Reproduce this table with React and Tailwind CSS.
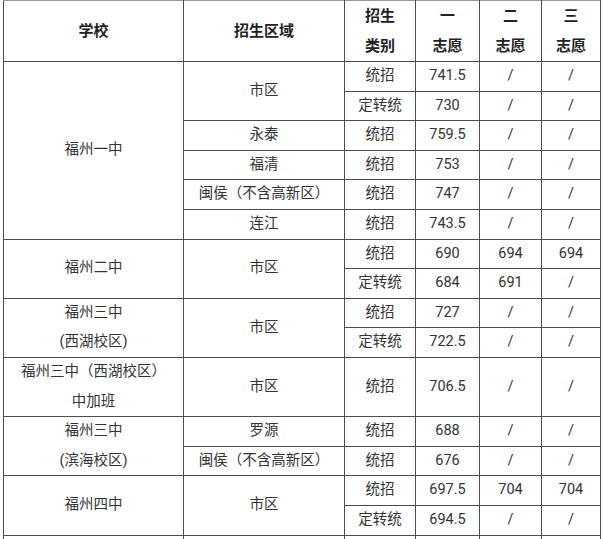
import React from 'react';

const rows = [
  { school: ['福州一中'], schoolSpan: 6, region: '市区', regionSpan: 2, type: '统招', v: ['741.5', '/', '/'] },
  { type: '定转统', v: ['730', '/', '/'] },
  { region: '永泰', regionSpan: 1, type: '统招', v: ['759.5', '/', '/'] },
  { region: '福清', regionSpan: 1, type: '统招', v: ['753', '/', '/'] },
  { region: '闽侯（不含高新区）', regionSpan: 1, type: '统招', v: ['747', '/', '/'] },
  { region: '连江', regionSpan: 1, type: '统招', v: ['743.5', '/', '/'] },
  { school: ['福州二中'], schoolSpan: 2, region: '市区', regionSpan: 2, type: '统招', v: ['690', '694', '694'] },
  { type: '定转统', v: ['684', '691', '/'] },
  { school: ['福州三中', '(西湖校区)'], schoolSpan: 2, region: '市区', regionSpan: 2, type: '统招', v: ['727', '/', '/'] },
  { type: '定转统', v: ['722.5', '/', '/'] },
  { school: ['福州三中（西湖校区）', '中加班'], schoolSpan: 1, region: '市区', regionSpan: 1, type: '统招', v: ['706.5', '/', '/'], tall: true },
  { school: ['福州三中', '(滨海校区)'], schoolSpan: 2, region: '罗源', regionSpan: 1, type: '统招', v: ['688', '/', '/'] },
  { region: '闽侯（不含高新区）', regionSpan: 1, type: '统招', v: ['676', '/', '/'] },
  { school: ['福州四中'], schoolSpan: 2, region: '市区', regionSpan: 2, type: '统招', v: ['697.5', '704', '704'] },
  { type: '定转统', v: ['694.5', '/', '/'] },
];

const cell = 'border border-[#4d4d4d] text-center align-middle p-0 leading-[28.6px]';

function Lines({ items }){
  return items.map((t, i) => <div key={i} className={i > 0 ? 'mt-[1px]' : ''}>{t}</div>);
}

export default function App(){
  return (
    <div className="bg-white w-[604px] h-[539px] overflow-hidden pl-[3px]" style={{ fontFamily: 'Roboto, "Noto Sans CJK SC", sans-serif' }}>
      <table className="border-collapse table-fixed w-[597px] text-[14.5px] text-[#333]">
        <colgroup>
          <col className="w-[180px]" />
          <col className="w-[161px]" />
          <col className="w-[71px]" />
          <col className="w-[64px]" />
          <col className="w-[62px]" />
          <col className="w-[59px]" />
        </colgroup>
        <thead>
          <tr className="h-[61px] font-bold text-[15px] text-[#222]">
            <th className={cell + ' border-t-[#999]'}>学校</th>
            <th className={cell + ' border-t-[#999]'}>招生区域</th>
            <th className={cell + ' border-t-[#999]'}><Lines items={['招生', '类别']} /></th>
            <th className={cell + ' border-t-[#999]'}><Lines items={['一', '志愿']} /></th>
            <th className={cell + ' border-t-[#999]'}><Lines items={['二', '志愿']} /></th>
            <th className={cell + ' border-t-[#999]'}><Lines items={['三', '志愿']} /></th>
          </tr>
        </thead>
        <tbody>
          {rows.map((r, i) => (
            <tr key={i} className={r.tall ? 'h-[59.2px]' : 'h-[29.6px]'}>
              {r.school && <td className={cell} rowSpan={r.schoolSpan}><Lines items={r.school} /></td>}
              {r.region && <td className={cell} rowSpan={r.regionSpan}>{r.region}</td>}
              <td className={cell}>{r.type}</td>
              {r.v.map((x, j) => <td key={j} className={cell}>{x}</td>)}
            </tr>
          ))}
          <tr className="h-[29.6px]">
            <td className={cell}></td>
            <td className={cell}></td>
            <td className={cell}></td>
            <td className={cell}></td>
            <td className={cell}></td>
            <td className={cell}></td>
          </tr>
        </tbody>
      </table>
    </div>
  );
}
